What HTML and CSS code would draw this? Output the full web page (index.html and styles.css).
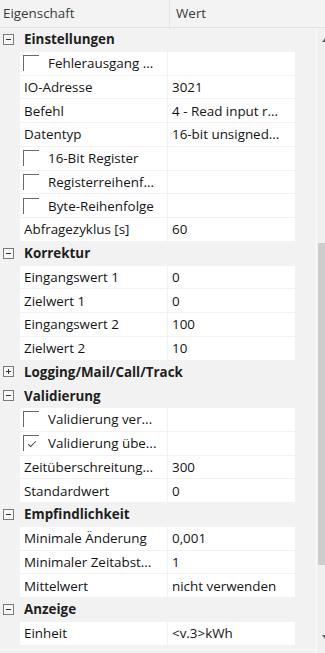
FILE: index.html
```html
<!DOCTYPE html>
<html>
<head>
<meta charset="utf-8">
<link rel="stylesheet" href="styles.css">
</head>
<body>
<div class="grid">
  <div class="header">
    <div class="h-prop">Eigenschaft</div>
    <div class="h-val">Wert</div>
  </div>
  <div class="body">
    <div class="rows">
      <div class="row cat"><span class="toggle"></span><span class="cat-label">Einstellungen</span></div>
      <div class="row"><div class="prop chk"><span class="box"></span><span>Fehlerausgang ...</span></div><div class="val"></div></div>
      <div class="row"><div class="prop">IO-Adresse</div><div class="val">3021</div></div>
      <div class="row"><div class="prop">Befehl</div><div class="val">4 - Read input r...</div></div>
      <div class="row"><div class="prop">Datentyp</div><div class="val">16-bit unsigned...</div></div>
      <div class="row"><div class="prop chk"><span class="box"></span><span>16-Bit Register</span></div><div class="val"></div></div>
      <div class="row"><div class="prop chk"><span class="box"></span><span>Registerreihenf...</span></div><div class="val"></div></div>
      <div class="row"><div class="prop chk"><span class="box"></span><span>Byte-Reihenfolge</span></div><div class="val"></div></div>
      <div class="row"><div class="prop">Abfragezyklus [s]</div><div class="val">60</div></div>
      <div class="row cat"><span class="toggle"></span><span class="cat-label">Korrektur</span></div>
      <div class="row"><div class="prop">Eingangswert 1</div><div class="val">0</div></div>
      <div class="row"><div class="prop">Zielwert 1</div><div class="val">0</div></div>
      <div class="row"><div class="prop">Eingangswert 2</div><div class="val">100</div></div>
      <div class="row"><div class="prop">Zielwert 2</div><div class="val">10</div></div>
      <div class="row cat"><span class="toggle plus"></span><span class="cat-label">Logging/Mail/Call/Track</span></div>
      <div class="row cat"><span class="toggle"></span><span class="cat-label">Validierung</span></div>
      <div class="row"><div class="prop chk"><span class="box"></span><span>Validierung ver...</span></div><div class="val"></div></div>
      <div class="row"><div class="prop chk"><span class="box checked"></span><span>Validierung übe...</span></div><div class="val"></div></div>
      <div class="row"><div class="prop">Zeitüberschreitung...</div><div class="val">300</div></div>
      <div class="row"><div class="prop">Standardwert</div><div class="val">0</div></div>
      <div class="row cat"><span class="toggle"></span><span class="cat-label">Empfindlichkeit</span></div>
      <div class="row"><div class="prop">Minimale Änderung</div><div class="val">0,001</div></div>
      <div class="row"><div class="prop">Minimaler Zeitabst...</div><div class="val">1</div></div>
      <div class="row"><div class="prop">Mittelwert</div><div class="val">nicht verwenden</div></div>
      <div class="row cat"><span class="toggle"></span><span class="cat-label">Anzeige</span></div>
      <div class="row"><div class="prop">Einheit</div><div class="val">&lt;v.3&gt;kWh</div></div>
      <div class="foot"></div>
    </div>
    <div class="scroll">
      <span class="arrow up"></span>
      <div class="track"><div class="thumb"></div></div>
      <span class="arrow down"></span>
    </div>
  </div>
</div>
</body>
</html>
```

FILE: styles.css
```css
html, body {
  margin: 0;
  padding: 0;
  background: #f2f2f2;
}
.grid {
  width: 325px;
  height: 653px;
  overflow: hidden;
  font-family: "Open Sans", "Noto Sans", sans-serif;
  font-size: 13.4px;
  color: #141414;
  background: #f2f2f2;
}
.header {
  height: 27px;
  display: flex;
  border-bottom: 1px solid #e3e3e3;
  background: #f3f3f3;
  color: #3a3a3a;
}
.h-prop {
  width: 166px;
  padding-left: 3px;
  border-right: 1px solid #e3e3e3;
  line-height: 27px;
}
.h-val {
  padding-left: 6px;
  line-height: 27px;
}
.body {
  display: flex;
  height: 625px;
}
.rows {
  width: 316px;
  display: flex;
  flex-direction: column;
}
.row {
  height: 23.75px;
  flex: none;
  display: flex;
  box-sizing: border-box;
  padding-bottom: 1px;
}
.prop {
  margin-left: 20px;
  width: 147px;
  background: #fff;
  padding-left: 4px;
  box-sizing: border-box;
  display: flex;
  align-items: center;
  white-space: nowrap;
  overflow: hidden;
}
.prop.chk {
  padding-left: 3px;
}
.val {
  margin-left: 1px;
  width: 127px;
  background: #fff;
  padding-left: 4px;
  box-sizing: border-box;
  display: flex;
  align-items: center;
  white-space: nowrap;
  overflow: hidden;
}
.box {
  width: 16px;
  height: 16px;
  flex: none;
  box-sizing: border-box;
  border-top: 1px solid #6a6a6a;
  border-left: 1px solid #6a6a6a;
  margin-right: 9px;
  position: relative;
}
.box.checked::after {
  content: "";
  position: absolute;
  left: 4px;
  top: 5px;
  width: 7px;
  height: 3px;
  border-left: 1.3px solid #444;
  border-bottom: 1.3px solid #444;
  transform: rotate(-45deg);
}
.cat {
  align-items: center;
}
.toggle {
  width: 11px;
  height: 11px;
  box-sizing: border-box;
  border: 1px solid #7a7a7a;
  margin-left: 3px;
  margin-right: 10px;
  position: relative;
  flex: none;
  background: #f7f7f7;
}
.toggle::before {
  content: "";
  position: absolute;
  left: 2px;
  right: 2px;
  top: 4px;
  height: 1px;
  background: #333;
}
.toggle.plus::after {
  content: "";
  position: absolute;
  top: 2px;
  bottom: 2px;
  left: 4px;
  width: 1px;
  background: #333;
}
.cat-label {
  font-weight: 700;
  color: #1e1e1e;
}
.foot {
  height: 3px;
  border-bottom: 1px solid #fbfbfb;
  flex: none;
}
.scroll {
  flex: 1;
  border-left: 1px solid #fafafa;
  background: #f0f0f0;
  display: flex;
  flex-direction: column;
  position: relative;
}
.track {
  flex: 1;
  padding-top: 215px;
  padding-bottom: 88px;
  display: flex;
}
.thumb {
  margin-left: 1px;
  flex: 1;
  background: #cdcdcd;
}
.arrow {
  position: absolute;
  right: 0;
  width: 0;
  height: 0;
  border-left: 3px solid transparent;
  border-right: 3px solid transparent;
}
.arrow.up {
  top: 10px;
  right: -3px;
  border-bottom: 4px solid #606060;
}
.arrow.down {
  bottom: 14px;
  right: -3px;
  border-top: 4px solid #606060;
}
```
